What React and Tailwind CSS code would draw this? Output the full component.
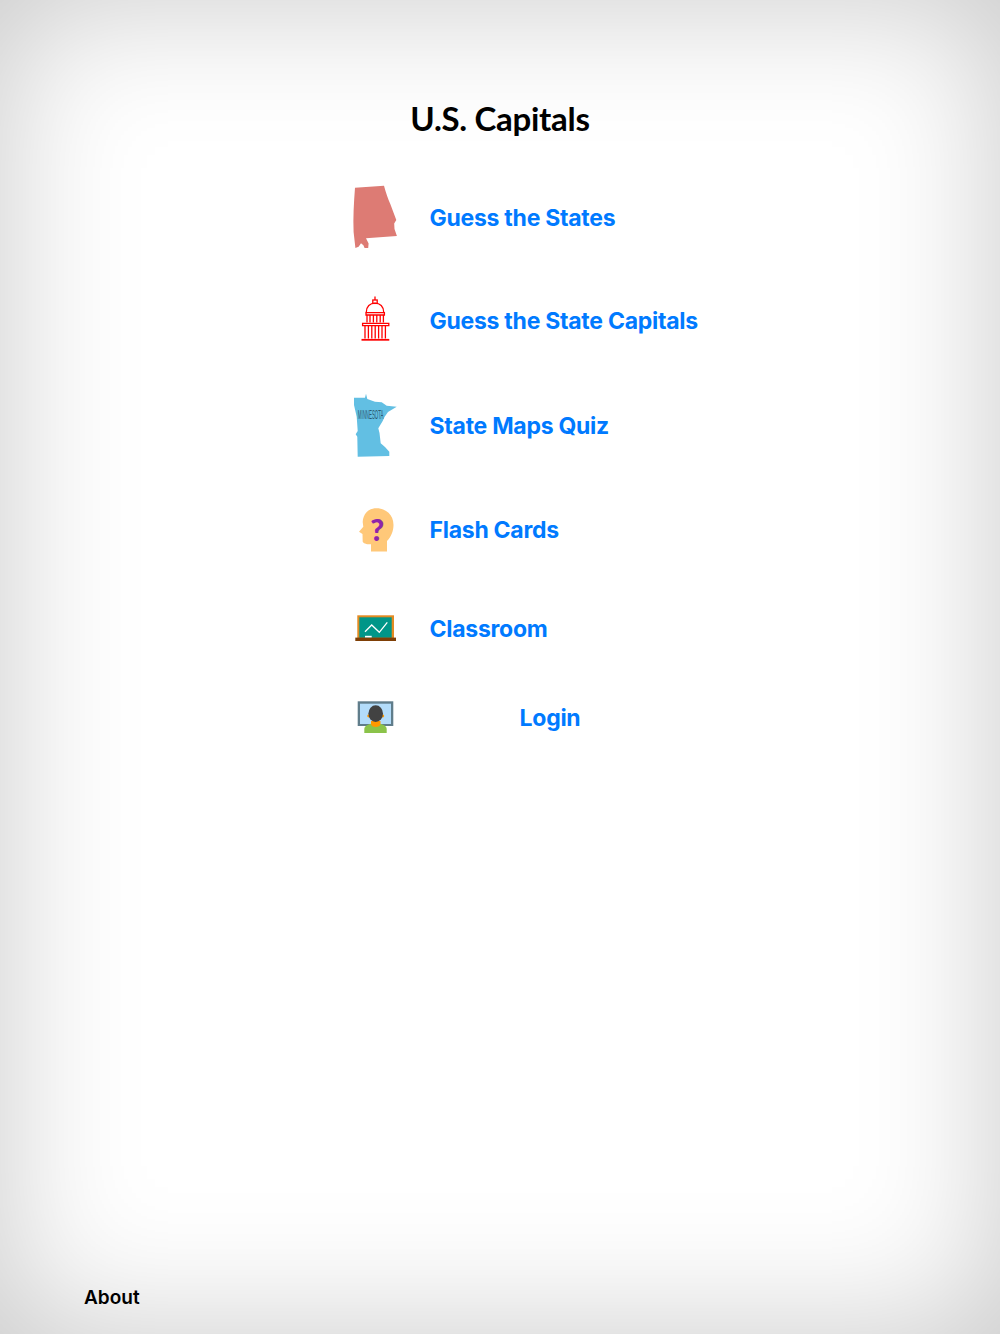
// Главное меню приложения U.S. Capitals
const AlabamaIcon = () => (
  <svg viewBox="350 182 50 70" className="h-[70px] w-[50px]">
    <path
      fill="#dd7b74"
      d="M355 187.7L384 185.7C386 193 388 199 390.5 204.5C392.5 210 394.5 215 396.3 220L394.2 223.5L394.5 229L396.9 235.9L366 238.2L368.6 243.5L368.2 247.9L364.6 248L363.4 245.2L361 243.2L358.6 246.8L355.4 247.9L353.6 232C353 218 353.8 203 355 187.7Z"
    />
  </svg>
);

const CapitolIcon = () => (
  <svg viewBox="350 294 50 50" className="h-[50px] w-[50px]" fill="none" stroke="#ff0000" strokeWidth="1.3">
    <path d="M375 296.5V300" />
    <rect x="372.8" y="300" width="4.4" height="3.4" />
    <path d="M366.3 312.3C366.3 306.5 370 303.2 375 303.2C380 303.2 383.7 306.5 383.7 312.3" />
    <path d="M366 312.6H384.4V315H366Z" />
    <path d="M367 315V322.6M370 315V322.6M373.4 315V322.6M376.8 315V322.6M380.2 315V322.6M383.4 315V322.6" />
    <path d="M362.6 323.4H388.8V325.6H362.6Z" />
    <path d="M365 325.6V338.6M368.4 325.6V338.6M371.8 325.6V338.6M375.2 325.6V338.6M378.6 325.6V338.6M382 325.6V338.6M385.4 325.6V338.6" />
    <path d="M361.5 339.8H389.3" strokeWidth="1.8" />
  </svg>
);

const MinnesotaIcon = () => (
  <svg viewBox="350 391 50 70" className="h-[70px] w-[50px]">
    <path
      fill="#62bfe3"
      d="M354 397.7L365 397.7L366 393.7L367.3 399L375 401.7L381.7 402.3L386.7 405.7L396.7 406.7L388 412L384.5 417L382.7 421L378.3 428.3L379.5 433L380.7 443.3L385 447L389.3 451.7L389.3 456L357.7 456.7L357.3 436.7L355.7 434.3L357.7 431L356.7 416.7L354 405Z"
    />
    <text transform="translate(357.8 419) scale(0.337 1)" fontSize="13" fill="#2b5a70" fontFamily="'Liberation Sans', sans-serif">
      MINNESOTA
    </text>
  </svg>
);

const HeadIcon = () => (
  <svg viewBox="350 505 50 50" className="h-[50px] w-[50px]">
    <path
      fill="#ffc879"
      d="M371 551.5L387 551.5L387 541C391 537 393.5 531 393.5 525C393.5 515 386 508.3 376.5 508.3C368 508.3 363 514.5 362.7 522L363.3 526.7L359 531.7L362.5 534L362.7 541.7C364 544 368 544.3 371 544.3Z"
    />
    <text x="377.3" y="540.5" textAnchor="middle" fontSize="30" fontWeight="900" fill="#8e24aa" fontFamily="Lato, sans-serif">
      ?
    </text>
  </svg>
);

const BoardIcon = () => (
  <svg viewBox="350 607 50 44" className="h-[44px] w-[50px]">
    <rect x="357.3" y="615.3" width="36.7" height="23" fill="#e38b22" />
    <rect x="359.3" y="617.3" width="32.4" height="20.5" fill="#009688" />
    <rect x="355.3" y="637.6" width="40.7" height="3.4" fill="#7f3f06" />
    <path d="M365 631.7L371.7 625L379.3 632.3L387.3 622.3" fill="none" stroke="#ffffff" strokeWidth="1.3" />
    <rect x="365" y="635.8" width="6.7" height="1.6" fill="#ffffff" />
  </svg>
);

const LoginIcon = () => (
  <svg viewBox="350 698 50 40" className="h-[40px] w-[50px]">
    <rect x="357.7" y="701.3" width="35.6" height="24.7" fill="#607d8b" />
    <rect x="360" y="703.7" width="31" height="20.3" fill="#b3dcfa" />
    <path d="M364.3 733V729C364.3 725.5 369 723.5 375.5 723.5C382 723.5 386.7 725.5 386.7 729V733Z" fill="#8bc34a" />
    <path d="M371 721H380.5V724C380.5 726 378 727 375.7 727C373.4 727 371 726 371 724Z" fill="#ff9800" />
    <circle cx="368.6" cy="716" r="1.4" fill="#ff9800" />
    <circle cx="382.8" cy="716" r="1.4" fill="#ff9800" />
    <ellipse cx="375.7" cy="713.6" rx="7.3" ry="8.4" fill="#424242" />
  </svg>
);

const menuRowClass = 'flex items-center gap-[29.5px]';
const menuTextClass = "text-[23px] font-bold tracking-[-0.27px] text-[#007aff]";

export default function App() {
  return (
    <div className="flex h-[1334px] flex-col bg-white font-['Inter',sans-serif] shadow-[inset_0_0_140px_rgba(0,0,0,0.22)]">
      <h1 className="pt-[95px] text-center font-['Lato',sans-serif] text-[33px] leading-[46px] font-bold tracking-[-0.3px] text-black">
        U.S. Capitals
      </h1>

      <div className="mt-[41px] ml-[350px] flex w-[380px] flex-col">
        <a className={`${menuRowClass} h-[70px]`}>
          <AlabamaIcon />
          <span className={`${menuTextClass} pt-[2px]`}>Guess the States</span>
        </a>
        <a className={`${menuRowClass} mt-[42px] h-[50px]`}>
          <CapitolIcon />
          <span className={`${menuTextClass} pt-[4px]`}>Guess the State Capitals</span>
        </a>
        <a className={`${menuRowClass} mt-[47px] h-[70px]`}>
          <MinnesotaIcon />
          <span className={menuTextClass}>State Maps Quiz</span>
        </a>
        <a className={`${menuRowClass} mt-[44px] h-[50px]`}>
          <HeadIcon />
          <span className={menuTextClass}>Flash Cards</span>
        </a>
        <a className={`${menuRowClass} mt-[52px] h-[44px]`}>
          <BoardIcon />
          <span className={menuTextClass}>Classroom</span>
        </a>
        <a className={`${menuRowClass} mt-[47px] h-[40px]`}>
          <LoginIcon />
          <span className={`${menuTextClass} w-[241px] text-center`}>Login</span>
        </a>
      </div>

      <a className="mt-auto pb-[22px] pl-[84px] text-[19px] leading-[28px] font-semibold text-black">About</a>
    </div>
  );
}
